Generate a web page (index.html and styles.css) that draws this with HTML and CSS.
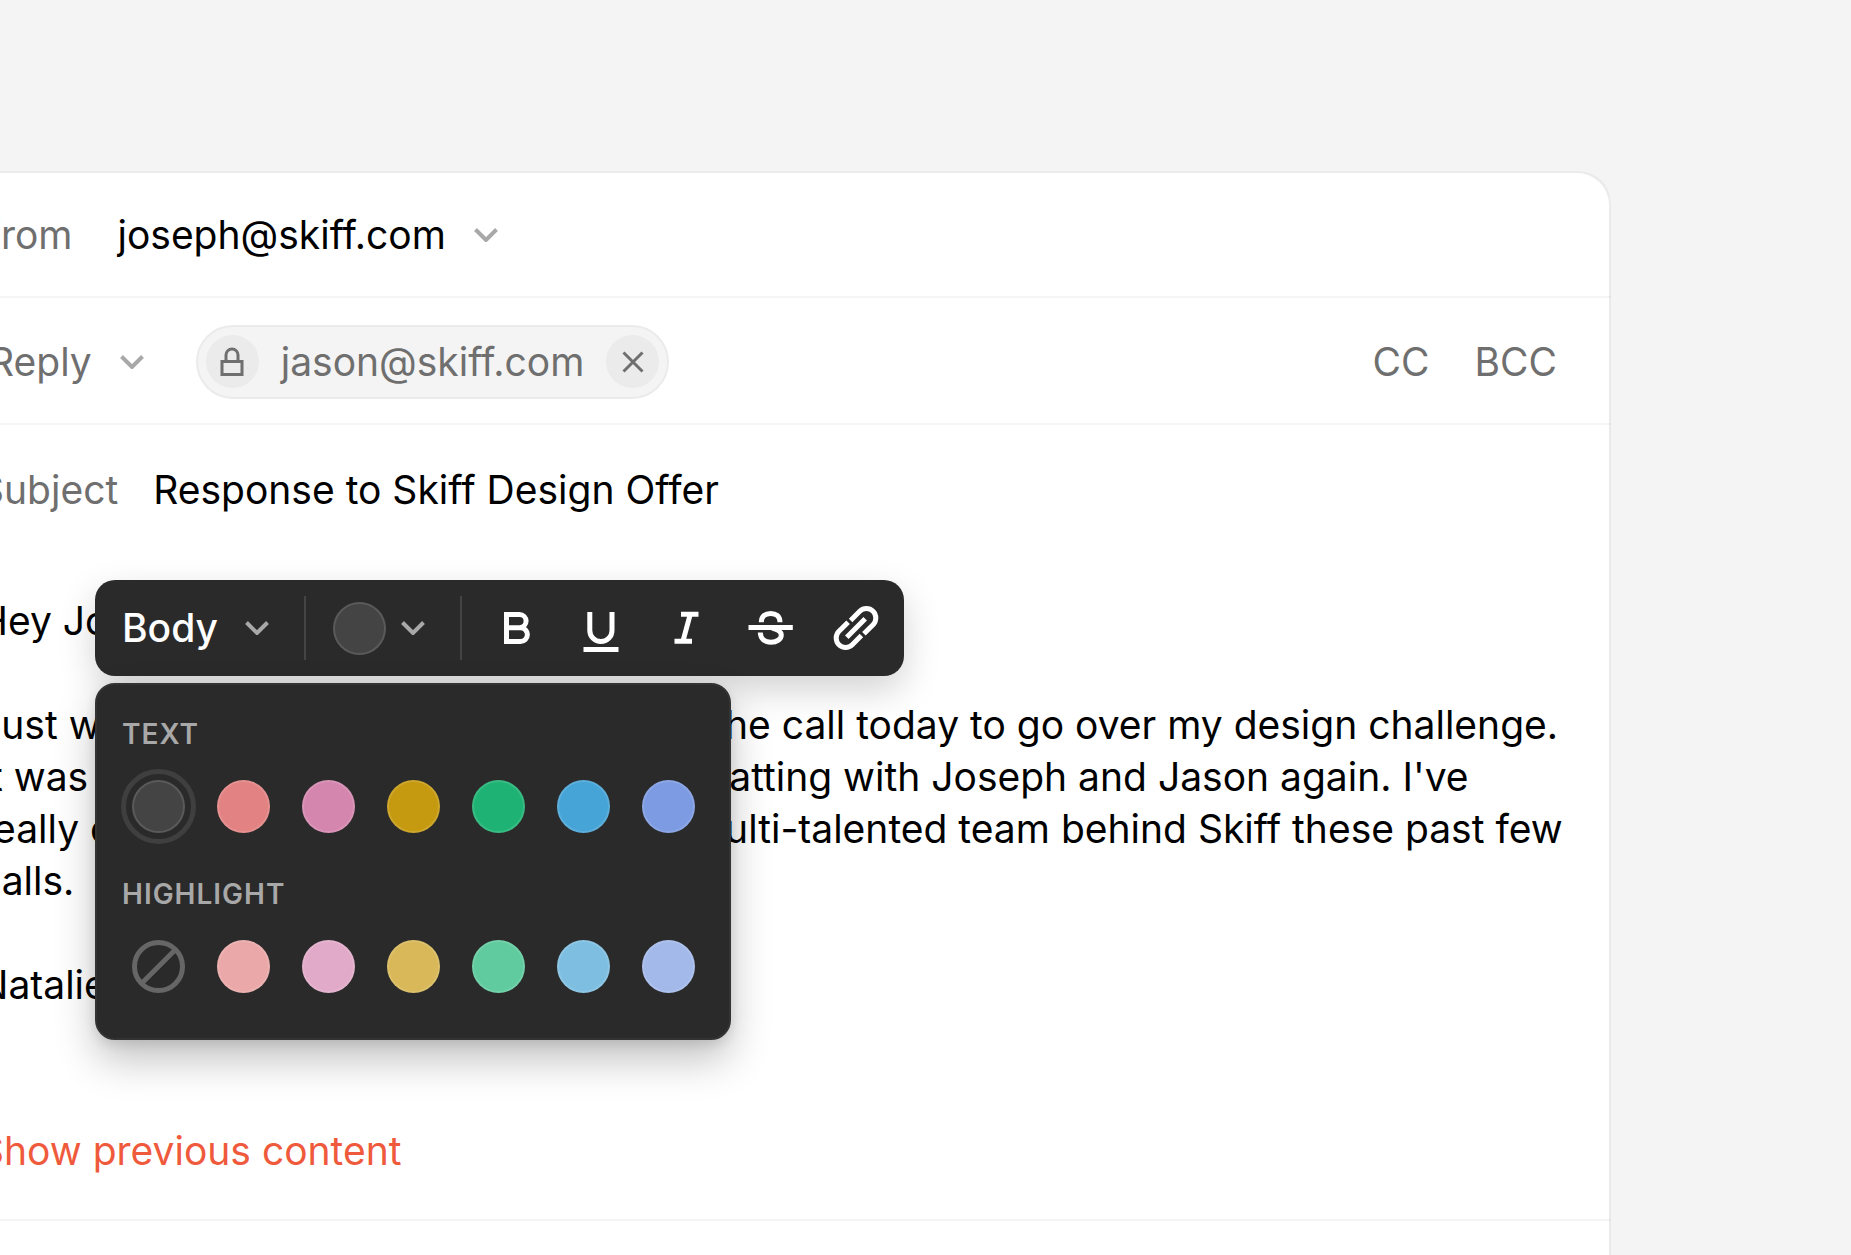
FILE: index.html
```
<!DOCTYPE html>
<html lang="en">
<head>
<meta charset="utf-8">
<meta name="viewport" content="width=device-width, initial-scale=1">
<title>Response to Skiff Design Offer</title>
<link rel="stylesheet" href="styles.css">
</head>
<body>
<main class="compose">
  <div class="row">
    <span class="label">From</span>
    <button class="picker from" type="button" aria-label="From address">joseph@skiff.com
      <svg class="chevron" viewBox="0 0 24 14"><path d="M1.5 1.5 12 12 22.5 1.5"/></svg>
    </button>
  </div>

  <div class="row recipients">
    <button class="picker reply" type="button">Reply
      <svg class="chevron" viewBox="0 0 24 14"><path d="M1.5 1.5 12 12 22.5 1.5"/></svg>
    </button>
    <div class="chip">
      <span class="chip-dot">
        <svg viewBox="0 0 24 30" width="24" height="30"><path d="M2 14.500H22V27.500H2ZM6 14.500V8A6 6 0 0 1 18 8V14.500"/></svg>
      </span>
      <span>jason@skiff.com</span>
      <button class="chip-dot" type="button" aria-label="Remove recipient">
        <svg viewBox="0 0 22 22" width="22" height="22"><path d="M1.500 1.500 20.500 20.500M20.500 1.500 1.500 20.500"/></svg>
      </button>
    </div>
    <div class="copies">
      <button type="button">CC</button>
      <button type="button">BCC</button>
    </div>
  </div>

  <div class="row subject">
    <label class="label" for="subject">Subject</label>
    <input id="subject" type="text" value="Response to Skiff Design Offer">
  </div>

  <section class="editor">
    <div class="message">
      <p>Hey Joseph,</p>
      <p>Just wanted to thank you for getting on the call today to go over my design challenge.<br>
      It was really nice seeing the team and chatting with Joseph and Jason again. I've<br>
      really enjoyed getting to know the real multi-talented team behind Skiff these past few<br>
      calls.</p>
      <p>Natalie</p>
    </div>
    <button class="previous" type="button">Show previous content</button>

    <div class="floating">
      <div class="toolbar" role="toolbar" aria-label="Formatting">
        <button class="tool-menu style-menu" type="button">Body
          <svg class="chevron" viewBox="0 0 24 14"><path d="M1.5 1.5 12 12 22.5 1.5"/></svg>
        </button>
        <span class="divider"></span>
        <button class="tool-menu color-menu" type="button" aria-label="Text color">
          <span class="swatch gray"></span>
          <svg class="chevron" viewBox="0 0 24 14"><path d="M1.5 1.5 12 12 22.5 1.5"/></svg>
        </button>
        <span class="divider"></span>
        <div class="tools">
          <button type="button" aria-label="Bold"><svg viewBox="0 0 48 48"><path d="M14.500 10.500H27.500a6.600 6.600 0 0 1 0 13.200H14.500ZM27.500 23.700h1a6.900 6.900 0 0 1 0 13.800H14.500V23.700"/></svg></button>
          <button type="button" aria-label="Underline"><svg viewBox="0 0 48 48"><path d="M12.800 8v18.500a11.100 11.100 0 0 0 22.200 0V8M6.500 45.500H41.500"/></svg></button>
          <button type="button" aria-label="Italic"><svg viewBox="0 0 48 48"><path d="M19 10.200H36.500M12.500 37.300H30M28.300 10.200 20.900 37.300"/></svg></button>
          <button type="button" aria-label="Strikethrough"><svg viewBox="0 0 48 48"><path d="M1.500 23.500H45.800M14.300 18.200C14.300 12 18.500 9.500 23.700 9.500S33 12 33 18.200M13.300 28.500C13.500 35 18 38.200 24 38.200S34.300 35 34.300 31C34.300 28 31 25.500 25 24"/></svg></button>
          <button type="button" aria-label="Link"><svg viewBox="0 0 48 48"><path d="M18.600 16.500 27.750 7.350A9.400 9.400 0 0 1 41.050 20.650L31.900 29.800M29.400 31.500 20.250 40.650A9.400 9.400 0 0 1 6.950 27.350L16.100 18.200M14.800 33.200 33.200 14.800"/></svg></button>
        </div>
      </div>

      <div class="palette">
        <h2>TEXT</h2>
        <div class="swatches">
          <button class="swatch gray selected" type="button" aria-label="Default"></button>
          <button class="swatch red" type="button" aria-label="Red"></button>
          <button class="swatch pink" type="button" aria-label="Pink"></button>
          <button class="swatch yellow" type="button" aria-label="Yellow"></button>
          <button class="swatch green" type="button" aria-label="Green"></button>
          <button class="swatch blue" type="button" aria-label="Blue"></button>
          <button class="swatch indigo" type="button" aria-label="Indigo"></button>
        </div>
        <h2>HIGHLIGHT</h2>
        <div class="swatches">
          <button class="swatch none" type="button" aria-label="No highlight"><svg viewBox="0 0 53 53" width="53" height="53"><circle cx="26.500" cy="26.500" r="24"/><path d="M43.500 9.500 9.500 43.500"/></svg></button>
          <button class="swatch light-red" type="button" aria-label="Light red"></button>
          <button class="swatch light-pink" type="button" aria-label="Light pink"></button>
          <button class="swatch light-yellow" type="button" aria-label="Light yellow"></button>
          <button class="swatch light-green" type="button" aria-label="Light green"></button>
          <button class="swatch light-blue" type="button" aria-label="Light blue"></button>
          <button class="swatch light-indigo" type="button" aria-label="Light indigo"></button>
        </div>
      </div>
    </div>
  </section>
</main>
</body>
</html>
```

FILE: styles.css
```
* {
  box-sizing: border-box;
}

body {
  margin: 0;
  min-height: 100vh;
  display: flex;
  background: #f4f4f4;
  color: #000;
  font: 400 39px/52px Inter, "Liberation Sans", sans-serif;
}

button,
input {
  margin: 0;
  padding: 0;
  border: 0;
  background: none;
  color: inherit;
  font: inherit;
}

button {
  cursor: pointer;
}

svg {
  display: block;
  flex: none;
  fill: none;
  stroke: currentColor;
}

.compose {
  flex: 1;
  min-width: 0;
  margin: 171px 240px 0 -75px;
  border-radius: 32px 32px 0 0;
  background: #fff;
  box-shadow: inset -2px 2px #ebebeb;
}

.row {
  display: flex;
  align-items: center;
  height: 127px;
  padding: 2px 54px 0;
  border-bottom: 2px solid rgba(0, 0, 0, 0.04);
}

.row.subject {
  border-bottom: 0;
}

.row .label,
.recipients {
  color: #6f6f6f;
}

.picker {
  display: flex;
  align-items: center;
  gap: 28px;
}

.chevron {
  width: 24px;
  height: 14px;
  color: #a8a8a8;
  stroke-width: 4;
}

.from {
  margin-left: 45px;
}

.reply {
  padding-left: 10px;
}

.chip {
  display: flex;
  align-items: center;
  gap: 22px;
  height: 74px;
  margin-left: 52px;
  padding: 0 8px;
  border: 2px solid #ebebeb;
  border-radius: 37px;
  background: #f4f4f4;
}

.chip-dot {
  display: grid;
  place-items: center;
  width: 53px;
  height: 53px;
  border-radius: 50%;
  background: #ebebeb;
  stroke-width: 3;
}

.copies {
  display: flex;
  gap: 45px;
  margin-left: auto;
}

#subject {
  flex: 1;
  min-width: 0;
  margin-left: 35px;
  outline: 0;
}

.editor {
  position: relative;
  padding: 43px 0 42px 54px;
  border-bottom: 2px solid rgba(0, 0, 0, 0.04);
}

.message {
  white-space: nowrap;
}

.message p {
  margin: 0 0 52px;
}

.previous {
  display: block;
  margin-top: 114px;
  color: #ef5a3c;
}

.floating {
  position: absolute;
  top: 28px;
  left: 170px;
  display: flex;
  flex-direction: column;
  align-items: flex-start;
  gap: 7px;
  color: #fff;
}

.toolbar,
.palette {
  border-radius: 20px;
  background: #2a2a2a;
}

.toolbar {
  display: flex;
  align-items: center;
  height: 96px;
  padding-right: 5px;
  box-shadow: 0 14px 36px rgba(0, 0, 0, 0.18);
}

.tool-menu {
  display: flex;
  align-items: center;
  height: 100%;
  padding-right: 35px;
  font-weight: 500;
}

.style-menu {
  gap: 27px;
  padding-left: 27px;
}

.color-menu {
  gap: 15px;
  padding-left: 27px;
}

.divider {
  width: 2px;
  height: 64px;
  background: #444;
}

.tools {
  display: grid;
  grid-template-columns: repeat(5, 85px);
  height: 100%;
  margin-left: 12px;
}

.tools button {
  display: grid;
  place-items: center;
}

.tools svg {
  width: 48px;
  height: 48px;
  stroke-width: 5;
}

.palette {
  padding: 32px 34px 45px 35px;
  border: 2px solid #333;
  box-shadow: 0 20px 40px rgba(0, 0, 0, 0.24), 0 4px 12px rgba(0, 0, 0, 0.1);
}

.palette h2 {
  margin: 0 0 29px -10px;
  color: #a8a8a8;
  font-size: 28px;
  line-height: 34px;
  font-weight: 600;
  letter-spacing: 1px;
}

.swatches {
  display: flex;
  gap: 32px;
}

.swatches + h2 {
  margin-top: 44px;
}

.swatch {
  flex: none;
  width: 53px;
  height: 53px;
  border: 2px solid rgba(255, 255, 255, 0.12);
  border-radius: 50%;
}

.swatch.selected {
  outline: 5px solid #3f3f3f;
  outline-offset: 6px;
}

.swatch.none {
  border: 0;
  color: #666;
  stroke-width: 5;
}

.gray { background: #444; }
.red { background: #e38282; }
.pink { background: #d486ae; }
.yellow { background: #c69a10; }
.green { background: #1eb374; }
.blue { background: #47a4d7; }
.indigo { background: #7d9be2; }
.light-red { background: #eaa8a8; }
.light-pink { background: #e1aac8; }
.light-yellow { background: #d8b858; }
.light-green { background: #60cb9f; }
.light-blue { background: #7ebfe1; }
.light-indigo { background: #a2b9ea; }
```
